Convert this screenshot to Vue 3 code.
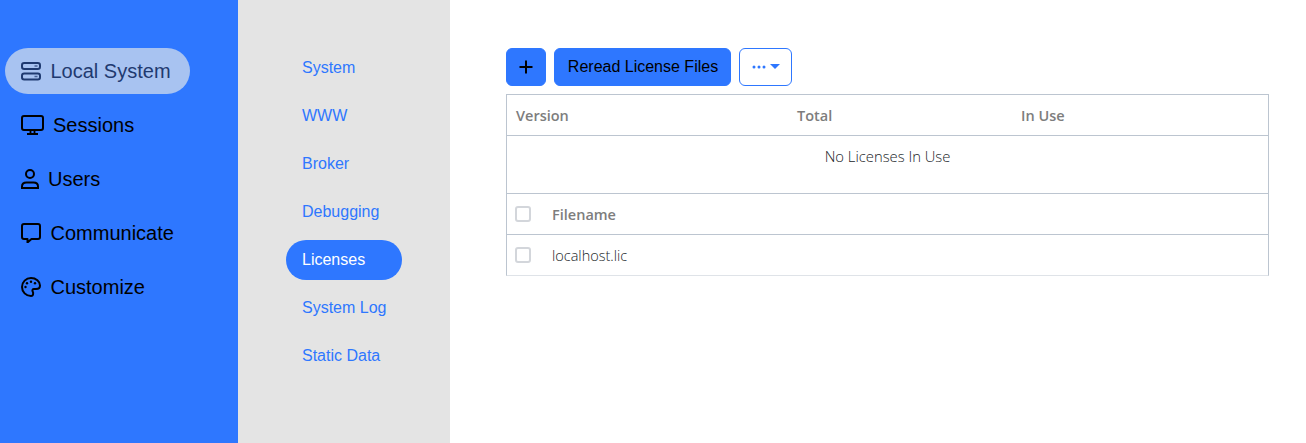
<script setup>
const sideItems = [
  { label: 'Local System', icon: 'hdd', active: true },
  { label: 'Sessions', icon: 'display' },
  { label: 'Users', icon: 'person' },
  { label: 'Communicate', icon: 'chat' },
  { label: 'Customize', icon: 'palette' },
]
const subItems = ['System', 'WWW', 'Broker', 'Debugging', 'Licenses', 'System Log', 'Static Data']
</script>

<template>
  <div class="page">
    <aside class="side">
      <a v-for="item in sideItems" :key="item.label" class="side-item" :class="{ active: item.active }">
        <svg v-if="item.icon === 'hdd'" class="ico w20" viewBox="0 0 20 20" fill="none" stroke="currentColor" stroke-width="2">
          <rect x="1" y="2" width="18" height="6" rx="2.2" />
          <rect x="1" y="12.500" width="18" height="6" rx="2.2" />
          <path d="M13.500 5h3M13.500 15.500h3" stroke-width="1.500" opacity=".7" />
        </svg>
        <svg v-else-if="item.icon === 'display'" class="ico w23" viewBox="0 0 23 20" fill="none" stroke="currentColor" stroke-width="2">
          <rect x="1" y="1" width="21" height="14" rx="2" />
          <path d="M9.500 15v3M13.500 15v3M6 19h11" stroke-width="1.800" />
        </svg>
        <svg v-else-if="item.icon === 'person'" class="ico w18" viewBox="0 0 18 20" fill="none" stroke="currentColor" stroke-width="2">
          <circle cx="9" cy="5" r="4" />
          <path d="M1 19v-1.500c0-2.500 2-4 4.500-4h7c2.500 0 4.500 1.500 4.500 4V19z" />
        </svg>
        <svg v-else-if="item.icon === 'chat'" class="ico w20" viewBox="0 0 20 20" fill="none" stroke="currentColor" stroke-width="2" stroke-linejoin="round">
          <path d="M3 1h14a2 2 0 0 1 2 2v11a2 2 0 0 1-2 2h-6.500L6.500 19.500V16H3a2 2 0 0 1-2-2V3a2 2 0 0 1 2-2z" />
        </svg>
        <svg v-else class="ico w20" viewBox="0 0 20 20" fill="none" stroke="currentColor" stroke-width="2">
          <path d="M10 1c5 0 9 3.500 9 7.500 0 2.500-1.800 3.500-4 3.500h-2c-1.500 0-2 1.500-1.300 2.600.7 1.200.6 2.100.3 3.200-.2.800-1 1.200-2 1.200C5 19 1 15 1 10s4-9 9-9z" />
          <g fill="currentColor" stroke="none">
            <circle cx="10" cy="4.700" r="1.200" />
            <circle cx="14" cy="6.300" r="1.200" />
            <circle cx="6" cy="6.300" r="1.200" />
            <circle cx="4.500" cy="10" r="1.200" />
          </g>
        </svg>
        <span>{{ item.label }}</span>
      </a>
    </aside>

    <nav class="sub">
      <div class="sub-list">
        <a v-for="s in subItems" :key="s" class="sub-item" :class="{ on: s === 'Licenses' }">{{ s }}</a>
      </div>
    </nav>

    <main class="main">
      <div class="toolbar">
        <button class="btn plus" aria-label="Add">
          <svg width="14" height="14" viewBox="0 0 14 14" fill="none" stroke="#000" stroke-width="2">
            <path d="M7 .5v13M.5 7h13" />
          </svg>
        </button>
        <button class="btn reread">Reread License Files</button>
        <button class="btn more" aria-label="More">
          <svg width="14" height="4" viewBox="0 0 14 4" fill="currentColor">
            <circle cx="2" cy="2" r="1.500" /><circle cx="7" cy="2" r="1.500" /><circle cx="12" cy="2" r="1.500" />
          </svg>
          <i class="caret"></i>
        </button>
      </div>

      <div class="box">
        <div class="row head cols3">
          <span>Version</span><span>Total</span><span>In Use</span>
        </div>
        <div class="empty">No Licenses In Use</div>
        <div class="row head files strong-top">
          <span class="check"></span><span>Filename</span>
        </div>
        <div class="row files body">
          <span class="check"></span><span>localhost.lic</span>
        </div>
      </div>
    </main>
  </div>
</template>

<style>
html, body { margin: 0; background: #fff; }
</style>

<style scoped>
.page {
  display: flex;
  height: 443px;
  overflow: hidden;
  font-family: "Liberation Sans", Arial, sans-serif;
}
.side {
  width: 238px;
  flex: none;
  box-sizing: border-box;
  background: #2e77ff;
  padding: 48px 0 0 5px;
  display: flex;
  flex-direction: column;
  align-items: flex-start;
  gap: 8px;
}
.side-item {
  display: flex;
  align-items: center;
  height: 46px;
  box-sizing: border-box;
  padding: 0 19px 0 16px;
  border-radius: 23px;
  font-size: 20px;
  color: #000;
}
.side-item.active {
  background: #a8c3f1;
  color: #1f3a70;
}
.ico { height: 20px; flex: none; margin-right: 9.500px; }
.w20 { width: 20px; }
.w23 { width: 23px; margin-right: 9px; }
.w18 { width: 18px; margin-right: 9px; }

.sub {
  width: 212px;
  flex: none;
  box-sizing: border-box;
  background: #e4e4e4;
  padding: 48px 0 0 48px;
}
.sub-list {
  display: flex;
  flex-direction: column;
  width: fit-content;
  gap: 8px;
}
.sub-item {
  display: block;
  padding: 8px 16px;
  font-size: 16px;
  line-height: 24px;
  color: #2e77ff;
  border-radius: 20px;
}
.sub-item.on {
  background: #2e77ff;
  color: #fff;
}

.main {
  flex: 1;
  box-sizing: border-box;
  padding: 48px 37px 0 56px;
}
.toolbar {
  display: flex;
  gap: 8px;
  margin-bottom: 8px;
}
.btn {
  height: 38px;
  box-sizing: border-box;
  padding: 0 13px;
  border: 1px solid #2e77ff;
  border-radius: 6px;
  background: #2e77ff;
  color: #000;
  font-family: inherit;
  font-size: 16px;
  display: flex;
  align-items: center;
  justify-content: center;
}
.plus { width: 40px; padding: 0; }
.reread { width: 177px; padding: 0 0 0 1px; }
.more {
  width: 53px;
  padding: 0;
  background: #fff;
  color: #2e77ff;
  gap: 4px;
}
.caret {
  width: 0;
  height: 0;
  border-left: 5px solid transparent;
  border-right: 5px solid transparent;
  border-top: 5px solid currentColor;
  margin-bottom: 2px;
}
.box {
  border: 1px solid #bcc5d0;
  border-bottom-color: #dfe3e8;
  font-family: "Open Sans", sans-serif;
  font-size: 14.500px;
  color: #212529;
}
.row {
  display: grid;
  align-items: center;
  height: 40px;
  border-bottom: 1px solid #bcc5d0;
}
.row.body { border-bottom: 0; }
.cols3 { grid-template-columns: 281px 224px 1fr; padding-left: 9px; }
.files { grid-template-columns: 37px 1fr; padding-left: 8px; }
.head { font-weight: 600; color: #7d7d7d; }
.body { font-weight: 300; }
.strong-top { border-top: 1px solid #bcc5d0; }
.empty {
  height: 57px;
  padding-top: 10px;
  box-sizing: border-box;
  text-align: center;
  font-size: 14.800px;
  font-weight: 300;
  line-height: 20px;
}
.check {
  width: 16px;
  height: 16px;
  box-sizing: border-box;
  border: 2px solid #d3d6db;
  border-radius: 3px;
  background: #fff;
}
</style>
